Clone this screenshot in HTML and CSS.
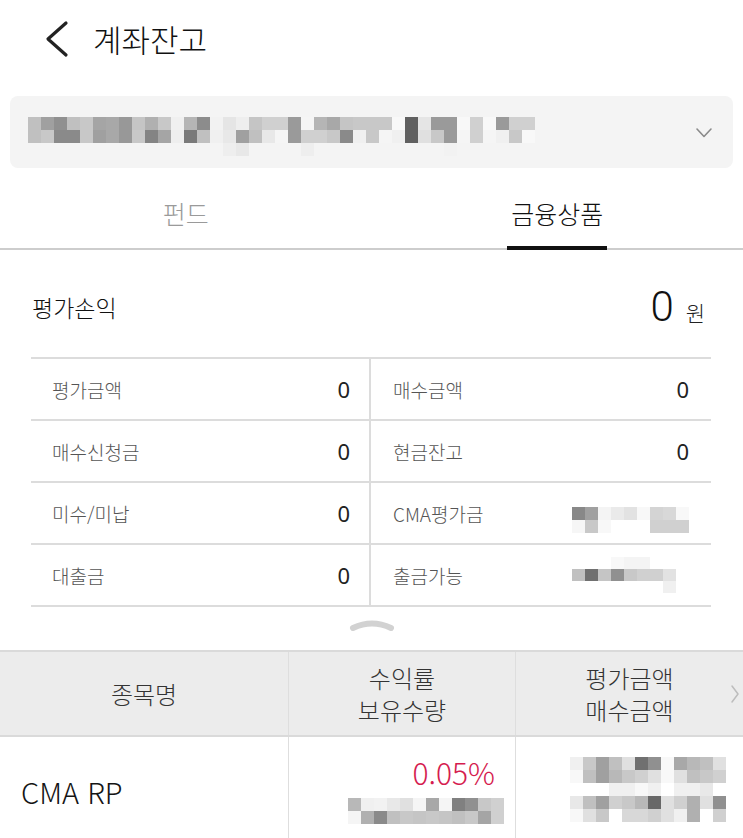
FILE: index.html
```html
<!DOCTYPE html>
<html lang="ko">
<head>
    <meta charset="UTF-8">
    <meta name="viewport" content="width=device-width, initial-scale=1.0">
    <title>계좌잔고</title>
    <link rel="stylesheet" href="styles.css">
</head>
<body>
    <div class="page">
        <header class="top-bar">
            <button class="back-btn" aria-label="뒤로">
                <svg width="26" height="38" viewBox="0 0 26 38">
                    <polyline points="22,3 4,19 22,35" fill="none" stroke="#222" stroke-width="3.2" stroke-linecap="round" stroke-linejoin="round"/>
                </svg>
            </button>
            <h1>계좌잔고</h1>
        </header>

        <div class="account-select">
            <div class="mosaic" data-rows="c0 a0 90 c0 c8 a5 a8 98 c5 b0 c8 f0 b5 8c f2 e5 ee c5 d0 d0 9a f5 b5 a8 c5 c8 c8 c8 f8 60 e5 9a 9a f8 d0 f8 9a d0 d0|c0 c8 8a 8a c8 a0 a8 98 c8 84 a5 ee 7a c0 f0 e8 a0 c0 e8 f5 9a d0 d0 c8 8a f0 c8 f5 f0 60 e0 c8 9a f5 d0 f5 f0 c8 f8|-- -- -- -- -- -- -- -- -- -- -- -- -- -- -- ee e8 -- -- -- -- ee -- -- -- -- -- -- -- -- -- -- f2 -- -- -- -- -- --"></div>
            <svg class="select-arrow" width="18" height="12" viewBox="0 0 18 12">
                <polyline points="2,2 9,9.5 16,2" fill="none" stroke="#8a8a8a" stroke-width="1.6" stroke-linecap="round" stroke-linejoin="round"/>
            </svg>
        </div>

        <nav class="tabs">
            <div class="tab"><span class="tab-label">펀드</span></div>
            <div class="tab active"><span class="tab-label">금융상품</span></div>
        </nav>

        <div class="summary">
            <span class="summary-title">평가손익</span>
            <span class="summary-amount"><span class="big-num">0</span><span class="won">원</span></span>
        </div>

        <div class="stats">
            <div class="stat left"><span class="stat-label">평가금액</span><span class="stat-value">0</span></div>
            <div class="stat"><span class="stat-label">매수금액</span><span class="stat-value">0</span></div>
            <div class="stat left"><span class="stat-label">매수신청금</span><span class="stat-value">0</span></div>
            <div class="stat"><span class="stat-label">현금잔고</span><span class="stat-value">0</span></div>
            <div class="stat left"><span class="stat-label">미수/미납</span><span class="stat-value">0</span></div>
            <div class="stat">
                <span class="stat-label">CMA평가금</span>
                <div class="mosaic" data-rows="-- -- -- -- -- -- -- -- --|88 a0 f4 ea e2 f8 d4 d8 f8|f6 c8 f8 -- -- -- d0 d0 d0"></div>
            </div>
            <div class="stat left"><span class="stat-label">대출금</span><span class="stat-value">0</span></div>
            <div class="stat">
                <span class="stat-label">출금가능</span>
                <div class="mosaic small" data-rows="-- -- -- f8 f4 f4 -- -- --|c0 70 c5 90 c8 d0 d0 e2 --|-- -- -- -- -- -- -- f0 --"></div>
            </div>
        </div>

        <div class="collapse">
            <svg width="46" height="14" viewBox="0 0 46 14">
                <path d="M4 10 Q23 1 42 10" fill="none" stroke="#d2d2d2" stroke-width="6" stroke-linecap="round"/>
            </svg>
        </div>

        <div class="holdings">
            <div class="holdings-head">
                <div class="col col-name">종목명</div>
                <div class="col col-rate">수익률<br>보유수량</div>
                <div class="col col-amount">평가금액<br>매수금액
                    <svg class="more-arrow" width="10" height="20" viewBox="0 0 10 20">
                        <polyline points="2,2 8,10 2,18" fill="none" stroke="#bdbdbd" stroke-width="1.5" stroke-linecap="round" stroke-linejoin="round"/>
                    </svg>
                </div>
            </div>
            <div class="holdings-row">
                <div class="col col-name">CMA RP</div>
                <div class="col col-rate">
                    <span class="rate up">0.05%</span>
                    <div class="mosaic" data-rows="b8 f0 f2 e8 e0 f5 a8 f5 80 90 c8 d0|f5 b0 8a c0 c8 c5 c8 c5 c0 c8 a5 d0"></div>
                </div>
                <div class="col col-amount">
                    <div class="mosaic" data-rows="f0 c8 a0 c0 e0 70 90 f8 a8 b8 c0 e0|f8 c0 a0 b8 c8 d0 e0 f8 e0 c0 c8 d0|-- -- -- f0 f0 f8 f0 -- f0 f0 e8 --|e8 c0 a0 d0 c8 b8 68 e0 d0 b0 e0 90|f8 e0 c8 -- d8 d8 d0 e0 f0 b0 -- d0"></div>
                </div>
            </div>
        </div>
    </div>

    <script>
        document.addEventListener('DOMContentLoaded', function() {
            // masked values: rows split by |, cells are gray levels in hex, -- is empty
            document.querySelectorAll('.mosaic').forEach(function(box) {
                box.dataset.rows.split('|').forEach(function(line) {
                    const row = document.createElement('div');
                    row.className = 'mosaic-row';
                    line.trim().split(/\s+/).forEach(function(v) {
                        const cell = document.createElement('span');
                        cell.className = 'mosaic-cell';
                        if (v !== '--') {
                            cell.style.backgroundColor = '#' + v + v + v;
                        }
                        row.appendChild(cell);
                    });
                    box.appendChild(row);
                });
            });
        });
    </script>
</body>
</html>
```

FILE: styles.css
```css
body {
    margin: 0;
    background-color: #fff;
    font-family: "Noto Sans CJK KR", "Noto Sans", sans-serif;
    font-weight: 300;
    color: #222;
}
.page {
    width: 743px;
}
.top-bar {
    display: flex;
    align-items: center;
    height: 76px;
    padding-left: 44px;
}
.back-btn {
    display: flex;
    padding: 0;
    border: none;
    background: none;
    margin-right: 23px;
    margin-top: 2px;
}
.top-bar h1 {
    margin: 0;
    font-size: 31px;
    font-weight: 300;
    color: #111;
}
.account-select {
    display: flex;
    align-items: flex-start;
    justify-content: space-between;
    height: 72px;
    margin: 20px 10px 0 10px;
    padding: 21px 20px 0 18px;
    box-sizing: border-box;
    background-color: #f4f4f4;
    border-radius: 8px;
}
.select-arrow {
    margin-top: 10px;
}
.mosaic-row {
    display: flex;
}
.mosaic-cell {
    display: block;
    width: 13px;
    height: 13px;
}
.mosaic.small .mosaic-cell {
    height: 12px;
}
.tabs {
    display: flex;
    border-bottom: 2px solid #cdcdcd;
}
.tab {
    flex: 1;
    text-align: center;
}
.tab-label {
    display: inline-block;
    padding: 27px 0 15px 0;
    line-height: 36px;
    font-size: 25px;
    color: #9a9a9a;
}
.tab.active .tab-label {
    width: 100px;
    color: #111;
    border-bottom: 4px solid #111;
    margin-bottom: -2px;
}
.summary {
    display: flex;
    justify-content: space-between;
    align-items: center;
    height: 107px;
    padding: 6px 38px 0 32px;
    box-sizing: border-box;
}
.summary-title {
    font-size: 23px;
    color: #111;
}
.summary-amount {
    display: flex;
    align-items: baseline;
}
.big-num {
    font-family: Roboto, sans-serif;
    font-weight: 300;
    font-size: 42px;
    color: #111;
    margin-right: 12px;
}
.won {
    font-size: 21px;
    color: #222;
}
.stats {
    display: grid;
    grid-template-columns: 1fr 1fr;
    margin: 0 32px 0 31px;
    border-top: 2px solid #dcdcdc;
}
.stat {
    display: flex;
    justify-content: space-between;
    align-items: center;
    height: 60px;
    padding: 0 22px 0 22px;
    border-bottom: 2px solid #dcdcdc;
}
.stat.left {
    padding: 0 19px 0 21px;
    border-right: 2px solid #dcdcdc;
}
.stat-label {
    font-size: 19px;
    color: #555;
}
.stat-value {
    font-family: "Noto Sans", sans-serif;
    font-weight: 400;
    font-size: 22px;
    color: #222;
}
.collapse {
    display: flex;
    justify-content: center;
    padding-top: 11px;
    height: 43px;
    box-sizing: border-box;
}
.holdings-head,
.holdings-row {
    display: grid;
    grid-template-columns: 288px 227px 228px;
}
.holdings-head {
    background-color: #ececec;
    border-top: 2px solid #dadada;
    border-bottom: 2px solid #dadada;
    height: 87px;
    box-sizing: border-box;
}
.holdings-head .col {
    display: flex;
    align-items: center;
    justify-content: center;
    text-align: center;
    font-size: 24px;
    line-height: 32px;
    color: #333;
}
.holdings-head .col + .col,
.holdings-row .col + .col {
    border-left: 1px solid #dedede;
}
.holdings-head .col-amount {
    position: relative;
}
.more-arrow {
    position: absolute;
    right: 3px;
    top: 32px;
}
.holdings-row {
    height: 103px;
}
.holdings-row .col-name {
    display: flex;
    align-items: center;
    padding-left: 21px;
    padding-top: 4px;
    font-size: 29px;
    color: #151515;
}
.holdings-row .col-rate {
    display: flex;
    flex-direction: column;
    align-items: flex-end;
    padding: 17px 11px 0 0;
}
.rate {
    font-size: 30px;
    line-height: 36px;
    margin-right: 9px;
}
.rate.up {
    color: #d51c4f;
}
.holdings-row .col-rate .mosaic {
    margin-top: 8px;
}
.holdings-row .col-amount {
    display: flex;
    justify-content: flex-end;
    padding: 20px 17px 0 0;
}
```
